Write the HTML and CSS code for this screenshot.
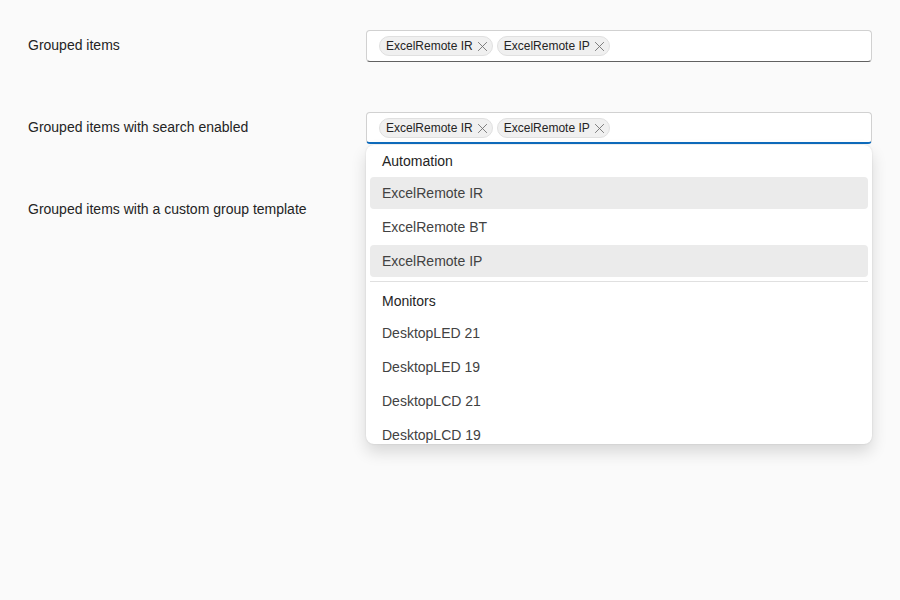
FILE: index.html
```html
<!DOCTYPE html>
<html lang="en">
<head>
<meta charset="utf-8">
<title>Grouped items</title>
<link rel="stylesheet" href="styles.css">
</head>
<body>
<main class="page">
  <div class="row">
    <div class="label">Grouped items</div>
    <div class="field">
      <div class="input">
        <span class="chip">ExcelRemote IR<svg class="x" viewBox="0 0 10 10"><path d="M1 1L9 9M9 1L1 9"/></svg></span>
        <span class="chip">ExcelRemote IP<svg class="x" viewBox="0 0 10 10"><path d="M1 1L9 9M9 1L1 9"/></svg></span>
      </div>
    </div>
  </div>
  <div class="row">
    <div class="label">Grouped items with search enabled</div>
    <div class="field">
      <div class="input input-light input-focus">
        <span class="chip">ExcelRemote IR<svg class="x" viewBox="0 0 10 10"><path d="M1 1L9 9M9 1L1 9"/></svg></span>
        <span class="chip">ExcelRemote IP<svg class="x" viewBox="0 0 10 10"><path d="M1 1L9 9M9 1L1 9"/></svg></span>
      </div>
      <div class="listbox">
        <div class="group">
          <div class="group-label">Automation</div>
          <div class="option selected">ExcelRemote IR</div>
          <div class="option">ExcelRemote BT</div>
          <div class="option selected">ExcelRemote IP</div>
        </div>
        <div class="divider"></div>
        <div class="group">
          <div class="group-label">Monitors</div>
          <div class="option">DesktopLED 21</div>
          <div class="option">DesktopLED 19</div>
          <div class="option">DesktopLCD 21</div>
          <div class="option">DesktopLCD 19</div>
        </div>
      </div>
    </div>
  </div>
  <div class="row">
    <div class="label">Grouped items with a custom group template</div>
    <div class="field">
      <div class="input input-light"></div>
    </div>
  </div>
</main>
</body>
</html>
```

FILE: styles.css
```css
html {
  height: 100%;
  background: #fafafa;
}
body {
  margin: 0;
  padding: 0;
  min-height: 100%;
  background: #fafafa;
  font-family: "Liberation Sans", Arial, sans-serif;
  color: #242424;
}
.page {
  min-height: 600px;
  box-sizing: border-box;
  padding: 30px 28px;
  display: flex;
  flex-direction: column;
  gap: 50px;
}
.row {
  display: flex;
  align-items: center;
}
.label {
  width: 338px;
  font-size: 14px;
  line-height: 20px;
  padding-bottom: 2px;
  color: #242424;
}
.field {
  flex: 1;
  position: relative;
}
.input {
  box-sizing: border-box;
  height: 32px;
  background: #ffffff;
  border: 1px solid #d1d1d1;
  border-bottom-color: #616161;
  border-radius: 4px;
  padding: 0 12px;
  display: flex;
  align-items: center;
  gap: 4px;
}
.input-focus {
  border-bottom: 2px solid #0f6cbd;
  padding-top: 1px;
}
.chip {
  box-sizing: border-box;
  height: 20px;
  display: inline-flex;
  align-items: center;
  padding: 0 4px 0 6px;
  background: #f0f0f0;
  border: 1px solid #e0e0e0;
  border-radius: 10px;
  font-size: 12px;
  color: #242424;
  white-space: nowrap;
}
.x {
  width: 11px;
  height: 11px;
  margin-left: 4px;
  fill: none;
  stroke: #707070;
  stroke-width: 0.8;
}
.listbox {
  position: absolute;
  left: 0;
  right: 0;
  top: calc(100% + 1px);
  height: 299px;
  overflow: hidden;
  box-sizing: border-box;
  background: #ffffff;
  border-radius: 8px;
  box-shadow: 0 0 2px rgba(0,0,0,0.12), 0 8px 16px rgba(0,0,0,0.14);
  padding: 0 4px;
  z-index: 2;
}
.group {
  display: flex;
  flex-direction: column;
}
.group-label {
  height: 32px;
  line-height: 32px;
  padding: 0 12px;
  font-size: 14px;
  color: #242424;
}
.option {
  height: 32px;
  line-height: 32px;
  padding: 0 12px;
  font-size: 14px;
  color: #424242;
  border-radius: 4px;
}
.option + .option {
  margin-top: 2px;
}
.option.selected {
  background: #ebebeb;
}
.divider {
  height: 1px;
  background: #e0e0e0;
  margin: 4px 0 3px;
}
```
